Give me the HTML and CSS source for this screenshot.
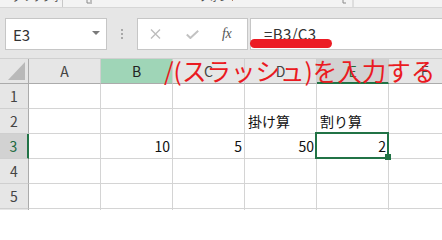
FILE: index.html
```html
<!DOCTYPE html>
<html lang="ja">
<head>
<meta charset="utf-8">
<link rel="stylesheet" href="styles.css">
</head>
<body>
<div class="top">
  <div class="strip">
    <span class="strip-label lbl1">クリップボード</span>
    <span class="strip-sep"></span>
    <svg class="launcher l1" width="12" height="7" viewBox="0 0 12 7"><path d="M2 0v3h3" fill="none" stroke="#8a8a8a" stroke-width="1"/><path d="M6 0v4" stroke="#8a8a8a"/></svg>
    <span class="strip-label lbl2">フォント</span>
    <svg class="launcher l2" width="13" height="7" viewBox="0 0 13 7"><path d="M2 0v3h3" fill="none" stroke="#8a8a8a" stroke-width="1"/><path d="M12 0v7" stroke="#c8c8c8"/></svg>
  </div>

  <div class="fbar">
    <div class="namebox"><span>E3</span><span class="caret"></span></div>
    <div class="dots"><i></i><i></i><i></i></div>
    <div class="fxbox">
      <svg class="ico-x" width="11" height="10" viewBox="0 0 11 10"><path d="M1 0.5L10 9.5M10 0.5L1 9.5" stroke="#bdbdbd" stroke-width="1.4" fill="none"/></svg>
      <svg class="ico-ok" width="13" height="9" viewBox="0 0 13 9"><path d="M0.8 4.6L4.4 8L12.2 0.8" stroke="#c2c2c2" stroke-width="2" fill="none"/></svg>
      <span class="fx">fx</span>
    </div>
    <div class="finput">
      <span class="ftext">=B3/C3</span>
      <span class="mark"></span>
    </div>
  </div>
</div>

<div class="sheet">
  <div class="c hd corner"></div>
  <div class="c hd col">A</div>
  <div class="c hd col ref">B</div>
  <div class="c hd col">C</div>
  <div class="c hd col">D</div>
  <div class="c hd col cur">E</div>
  <div class="c hd col">F</div>

  <div class="c hd row">1</div>
  <div class="c"></div><div class="c"></div><div class="c"></div><div class="c"></div><div class="c"></div><div class="c"></div>

  <div class="c hd row">2</div>
  <div class="c"></div><div class="c"></div><div class="c"></div>
  <div class="c">掛け算</div>
  <div class="c">割り算</div>
  <div class="c"></div>

  <div class="c hd row cur">3</div>
  <div class="c"></div>
  <div class="c num">10</div>
  <div class="c num">5</div>
  <div class="c num">50</div>
  <div class="c num active">2<span class="sel"></span><span class="handle"></span></div>
  <div class="c"></div>

  <div class="c hd row">4</div>
  <div class="c"></div><div class="c"></div><div class="c"></div><div class="c"></div><div class="c"></div><div class="c"></div>

  <div class="c hd row">5</div>
  <div class="c"></div><div class="c"></div><div class="c"></div><div class="c"></div><div class="c"></div><div class="c"></div>

  <div class="c hd row">6</div>
  <div class="c"></div><div class="c"></div><div class="c"></div><div class="c"></div><div class="c"></div><div class="c"></div>
</div>

<div class="note">/(スラッシュ)を入力する</div>
</body>
</html>
```

FILE: styles.css
```css
html, body {
  margin: 0;
  padding: 0;
  background: #fff;
}
body {
  width: 442px;
  height: 210px;
  overflow: hidden;
  position: relative;
  font-family: "Noto Sans CJK JP", "Noto Sans", sans-serif;
}
.top {
  background: #e6e6e6;
}

/* ribbon strip (cut off) */
.strip {
  height: 7px;
  background: #f3f3f3;
  border-bottom: 1px solid #d6d6d6;
  display: flex;
  align-items: flex-start;
  overflow: hidden;
  font-size: 10px;
  line-height: 14px;
  color: #444;
  white-space: nowrap;
}
.strip-label {
  margin-top: -10px;
  overflow: hidden;
}
.lbl1 {
  margin-left: 12px;
  width: 49px;
}
.strip-sep {
  width: 1px;
  height: 7px;
  background: #c8c8c8;
  margin-left: 1px;
}
.l1 { margin-left: 22px; }
.lbl2 {
  margin-left: 102px;
  width: 34px;
}
.l2 { margin-left: 108px; }

/* formula bar */
.fbar {
  display: flex;
  height: 32px;
  padding: 10px 0 8px 5px;
}
.namebox {
  width: 102px;
  box-sizing: border-box;
  border: 1px solid #c6c6c6;
  background: #fff;
  display: flex;
  align-items: center;
  justify-content: space-between;
  padding: 0 6px 0 7px;
  font-size: 15px;
  color: #333;
}
.caret {
  width: 0;
  height: 0;
  border-left: 4px solid transparent;
  border-right: 4px solid transparent;
  border-top: 4px solid #7a7a7a;
  margin-top: -2px;
}
.dots {
  width: 30px;
  display: flex;
  flex-direction: column;
  align-items: center;
  justify-content: center;
  gap: 2px;
}
.dots i {
  display: block;
  width: 2px;
  height: 2px;
  background: #a8a8a8;
}
.fxbox {
  width: 111px;
  box-sizing: border-box;
  border: 1px solid #c6c6c6;
  background: #fff;
  display: flex;
  align-items: center;
}
.ico-x { margin-left: 12px; }
.ico-ok { margin-left: 25px; margin-top: 1px; }
.fx {
  margin-left: 23px;
  font-family: "Liberation Serif", serif;
  font-style: italic;
  font-size: 14px;
  color: #555;
  letter-spacing: -0.5px;
}
.finput {
  flex: 1;
  margin-left: 2px;
  margin-right: -2px;
  border: 1px solid #c6c6c6;
  background: #fff;
  position: relative;
  display: flex;
  align-items: center;
  padding-left: 13px;
  font-size: 15px;
  color: #333;
}
.ftext {
  letter-spacing: 0.4px;
  margin-top: -2px;
}
.mark {
  position: absolute;
  left: -1px;
  top: 20px;
  width: 82px;
  height: 9px;
  border-radius: 5px;
  background: #ec1c24;
}

/* sheet */
.sheet {
  display: grid;
  grid-template-columns: 29px repeat(6, 72px);
  grid-auto-rows: 25px;
  border-top: 1px solid #d0d0d0;
  background: #fff;
}
.c {
  box-sizing: border-box;
  border-right: 1px solid #d4d4d4;
  border-bottom: 1px solid #d4d4d4;
  background: #fff;
  font-size: 14px;
  line-height: 24px;
  padding: 0 3px;
  color: #111;
  white-space: nowrap;
  overflow: hidden;
}
.num {
  text-align: right;
  padding-right: 2px;
}
.hd {
  background: #e6e6e6;
  color: #444;
  text-align: center;
  padding: 0;
  font-size: 14px;
}
.col {
  border-bottom-color: #ababab;
  border-right-color: #cfcfcf;
}
.row {
  border-right-color: #ababab;
  border-bottom-color: #cfcfcf;
}
.corner {
  position: relative;
  border-right-color: #ababab;
  border-bottom-color: #ababab;
}
.corner::after {
  content: "";
  position: absolute;
  left: 8px;
  top: 3px;
  width: 17px;
  height: 18px;
  background: #b9b9b9;
  clip-path: polygon(100% 0, 100% 100%, 0 100%);
}
.col.ref {
  background: #9fd5b7;
  color: #222;
}
.col.cur {
  background: #d2d2d2;
  color: #1e6b41;
  border-bottom: 2px solid #217346;
}
.row.cur {
  background: #d2d2d2;
  color: #1e6b41;
  border-right: 2px solid #217346;
}
.active {
  position: relative;
  overflow: visible;
}
.sel {
  position: absolute;
  left: -2px;
  top: -2px;
  right: -1px;
  bottom: -1px;
  border: 2px solid #217346;
  z-index: 2;
}
.handle {
  position: absolute;
  right: -3px;
  bottom: -2px;
  width: 6px;
  height: 6px;
  background: #217346;
  z-index: 3;
}

/* annotation */
.note {
  position: absolute;
  left: 164px;
  top: 55px;
  font-size: 24.5px;
  line-height: 32px;
  color: #ea1a22;
  white-space: nowrap;
  z-index: 5;
}
```
